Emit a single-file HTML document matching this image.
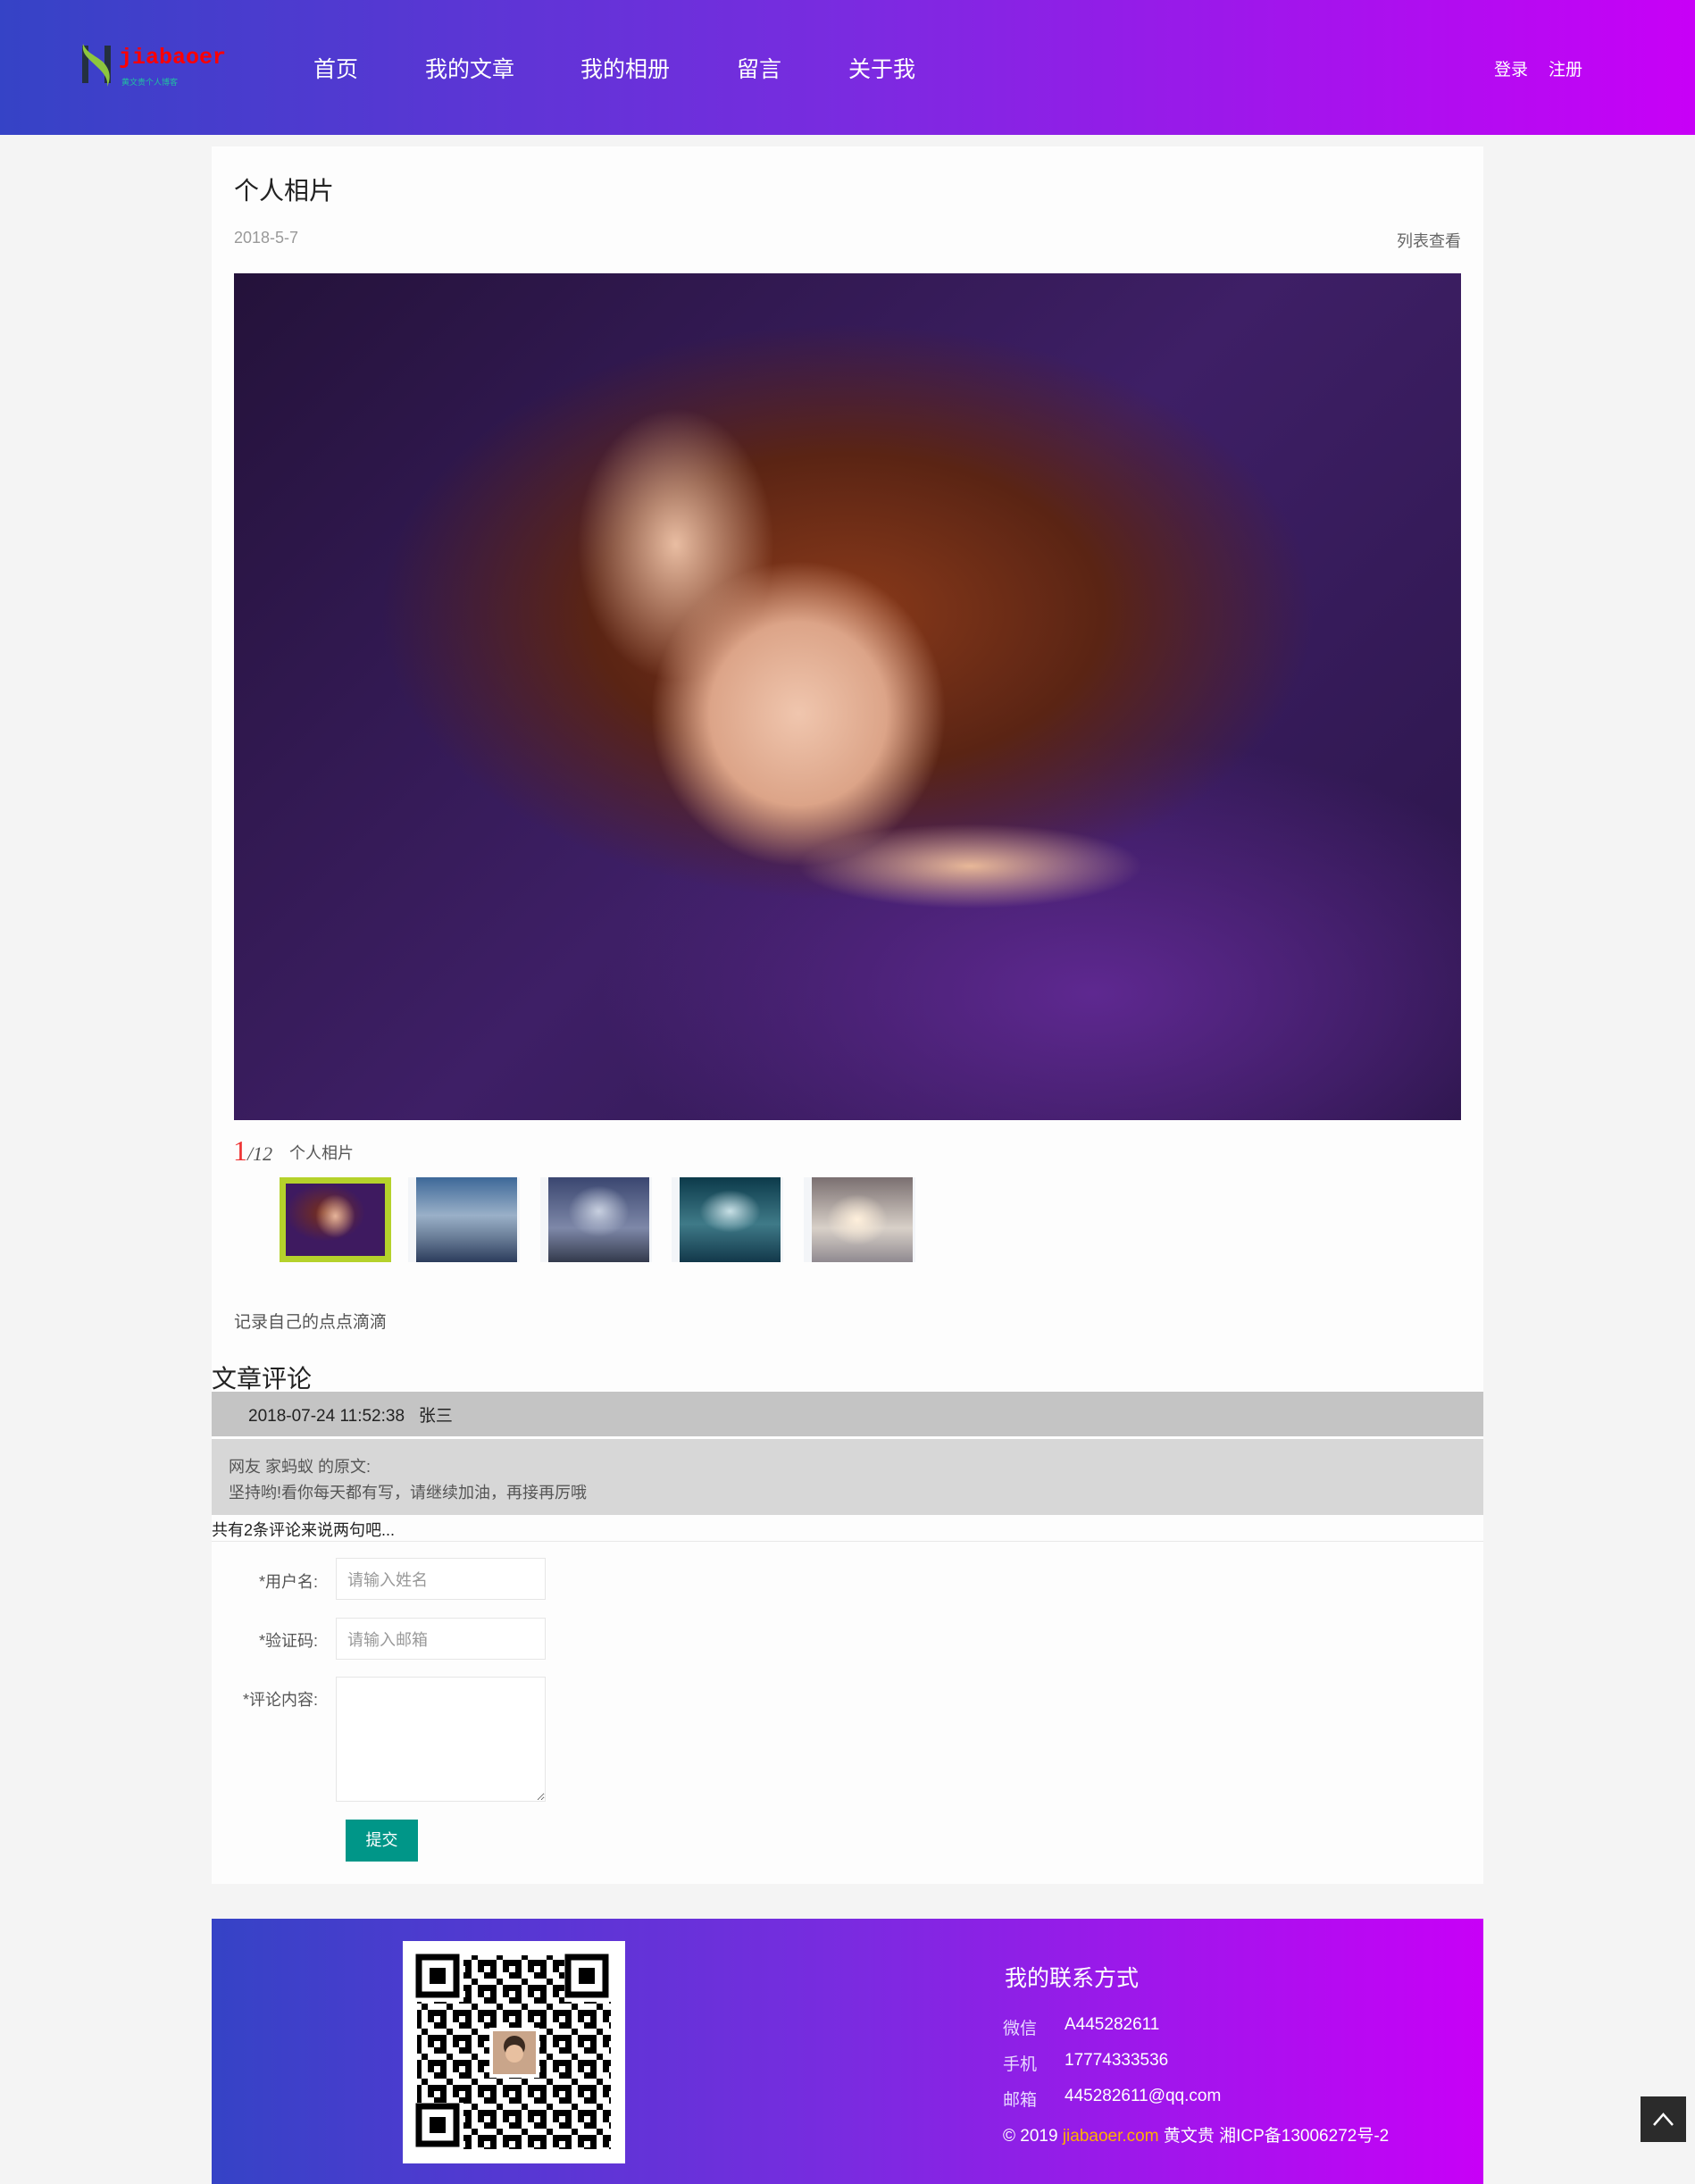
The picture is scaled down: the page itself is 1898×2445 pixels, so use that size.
<!DOCTYPE html>
<html><head><meta charset="utf-8">
<style>
*{margin:0;padding:0;box-sizing:border-box}
body{width:1898px;height:2445px;background:#f4f4f4;font-family:"Liberation Sans","Noto Sans CJK SC",sans-serif;position:relative;overflow:hidden;color:#333}
.abs{position:absolute}
.grad{background:linear-gradient(90deg,#3543c6 0%,#7a2be0 50%,#c800f7 100%)}
header{position:absolute;left:0;top:0;width:1898px;height:151px}
.nav{color:#fff;font-size:25px;top:58px}
.box{left:237px;top:164px;width:1424px;height:1945px;background:#fdfdfd}
.t{white-space:nowrap}
.thumb{top:1318px;height:95px;width:125px;background:#f3f5f8}
.thumb i{position:absolute;top:0;left:9px;width:113px;height:95px;display:block}
input,textarea{position:absolute;border:1px solid #e6e6e6;background:#fff;font-size:18px;color:#999;padding-left:12px;font-family:inherit}
.lbl{font-size:18px;color:#555;text-align:right;width:140px;left:216px}
.ft{color:#fff;font-size:19px}
</style></head><body>
<header class="grad">
  <svg class="abs" style="left:89px;top:47px" width="40" height="50" viewBox="0 0 40 50">
    <rect x="3" y="4" width="7" height="42" fill="#243040"/>
    <rect x="28" y="4" width="7" height="42" fill="#243040"/>
    <path d="M4 2 C2 14 10 18 22 30 C30 38 32 44 31 50 C36 40 34 30 26 22 C16 14 8 12 4 2Z" fill="#8dc63f"/>
  </svg>
  <div class="abs t" style="left:133px;top:50px;color:#f00;font-size:25px;font-family:'Liberation Mono',monospace;font-weight:bold">jiabaoer</div>
  <div class="abs t" style="left:136px;top:85px;color:#20c0a0;font-size:9px">黄文贵个人博客</div>
  <div class="abs nav t" style="left:351px">首页</div>
  <div class="abs nav t" style="left:476px">我的文章</div>
  <div class="abs nav t" style="left:650px">我的相册</div>
  <div class="abs nav t" style="left:825px">留言</div>
  <div class="abs nav t" style="left:950px">关于我</div>
  <div class="abs t" style="left:1673px;top:63px;color:#fff;font-size:19px">登录</div>
  <div class="abs t" style="left:1734px;top:63px;color:#fff;font-size:19px">注册</div>
</header>
<div class="abs box"></div>
<div class="abs t" style="left:262px;top:192px;font-size:28px;color:#222">个人相片</div>
<div class="abs t" style="left:262px;top:256px;font-size:18px;color:#999">2018-5-7</div>
<div class="abs t" style="left:1564px;top:256px;font-size:18px;color:#666">列表查看</div>
<div class="abs" style="left:262px;top:306px;width:1374px;height:948px;overflow:hidden;background:
radial-gradient(ellipse 12% 18% at 46% 52%,#f0c6ae 0%,#dca488 60%,transparent 100%),
radial-gradient(ellipse 14% 5% at 60% 70%,#e8b898 0%,transparent 100%),
radial-gradient(ellipse 8% 16% at 36% 32%,#e9bda2 0%,transparent 100%),
radial-gradient(ellipse 38% 34% at 50% 40%,#8a3a1a 0%,#5a2414 55%,transparent 100%),
radial-gradient(ellipse 40% 30% at 70% 85%,#5e2890 0%,transparent 100%),
linear-gradient(135deg,#24123a 0%,#3e1f66 50%,#2a1548 100%)"></div>
<div class="abs t" style="left:261px;top:1270px;font-size:32px;color:#e33;font-family:'Liberation Serif',serif">1<span style="font-size:22px;color:#555;font-style:italic">/12</span></div>
<div class="abs t" style="left:324px;top:1277px;font-size:18px;color:#555">个人相片</div>
<div class="abs" style="left:313px;top:1318px;width:125px;height:95px;background:#b5d22b"><i style="position:absolute;left:7px;top:7px;width:111px;height:81px;background:radial-gradient(ellipse 20% 30% at 50% 45%,#e6b49a,transparent),radial-gradient(ellipse 40% 40% at 40% 40%,#7a3018,transparent),#3e1a60"></i></div>
<div class="abs thumb" style="left:457px"><i style="background:linear-gradient(180deg,#3d6898 0%,#9ab0c8 45%,#6b7f99 70%,#2c3c5c 100%)"></i></div>
<div class="abs thumb" style="left:605px"><i style="background:radial-gradient(ellipse 30% 30% at 50% 40%,#c8d0e0,transparent),linear-gradient(180deg,#3a4670 0%,#7e88a8 60%,#333a4c 100%)"></i></div>
<div class="abs thumb" style="left:752px"><i style="background:radial-gradient(ellipse 30% 25% at 50% 40%,#c8e0e6,transparent),linear-gradient(180deg,#0c3a4a 0%,#3f7a88 55%,#12384a 100%)"></i></div>
<div class="abs thumb" style="left:900px"><i style="background:radial-gradient(ellipse 30% 30% at 45% 50%,#fff0dc,transparent),linear-gradient(180deg,#7a6f70 0%,#d8d0c8 60%,#908a90 100%)"></i></div>
<div class="abs t" style="left:262px;top:1465px;font-size:19px;color:#555">记录自己的点点滴滴</div>
<div class="abs t" style="left:237px;top:1522px;font-size:28px;color:#222">文章评论</div>
<div class="abs" style="left:237px;top:1558px;width:1424px;height:50px;background:#c4c4c4"></div>
<div class="abs t" style="left:278px;top:1570px;font-size:19px;color:#222">2018-07-24 11:52:38 &nbsp; 张三</div>
<div class="abs" style="left:237px;top:1611px;width:1424px;height:85px;background:#d7d7d7"></div>
<div class="abs t" style="left:256px;top:1628px;font-size:18px;color:#555">网友 家蚂蚁 的原文:</div>
<div class="abs t" style="left:256px;top:1657px;font-size:18px;color:#555">坚持哟!看你每天都有写，请继续加油，再接再厉哦</div>
<div class="abs t" style="left:237px;top:1699px;font-size:18px;color:#222">共有2条评论来说两句吧...</div>
<div class="abs" style="left:237px;top:1725px;width:1424px;height:1px;background:#e8e8e8"></div>
<div class="abs lbl t" style="top:1757px">*用户名:</div>
<input style="left:376px;top:1744px;width:235px;height:47px" value="请输入姓名">
<div class="abs lbl t" style="top:1823px">*验证码:</div>
<input style="left:376px;top:1811px;width:235px;height:47px" value="请输入邮箱">
<div class="abs lbl t" style="top:1889px">*评论内容:</div>
<textarea style="left:376px;top:1877px;width:235px;height:140px"></textarea>
<div class="abs t" style="left:387px;top:2037px;width:81px;height:47px;background:#009688;color:#fff;font-size:18px;text-align:center;line-height:47px">提交</div>
<div class="abs grad" style="left:237px;top:2148px;width:1424px;height:297px"></div>
<div class="abs" style="left:451px;top:2173px;width:249px;height:249px;background:#fff">
<svg width="249" height="249" viewBox="0 0 249 249">
<defs><pattern id="q" width="28" height="28" patternUnits="userSpaceOnUse">
<rect x="0" y="0" width="7" height="7" fill="#000"/><rect x="14" y="0" width="7" height="14" fill="#000"/><rect x="7" y="7" width="7" height="7" fill="#000"/><rect x="21" y="14" width="7" height="7" fill="#000"/><rect x="0" y="21" width="14" height="7" fill="#000"/><rect x="14" y="21" width="7" height="7" fill="#000"/>
</pattern></defs>
<rect x="16" y="16" width="217" height="217" fill="url(#q)"/>
<g fill="#fff"><rect x="14" y="14" width="54" height="54"/><rect x="181" y="14" width="54" height="54"/><rect x="14" y="181" width="54" height="54"/></g>
<g fill="none" stroke="#000" stroke-width="7"><rect x="18" y="18" width="42" height="42"/><rect x="185" y="18" width="42" height="42"/><rect x="18" y="185" width="42" height="42"/></g>
<g fill="#000"><rect x="30" y="30" width="18" height="18"/><rect x="197" y="30" width="18" height="18"/><rect x="30" y="197" width="18" height="18"/></g>
<rect x="97" y="97" width="56" height="56" fill="#fff"/><rect x="101" y="101" width="48" height="48" fill="#c9a58a"/><circle cx="125" cy="118" r="12" fill="#3a2a20"/><circle cx="125" cy="126" r="10" fill="#e8c0a0"/>
</svg></div>
<div class="abs ft t" style="left:1125px;top:2195px;font-size:25px">我的联系方式</div>
<div class="abs ft t" style="left:1123px;top:2256px;color:#e8d8ff">微信</div><div class="abs ft t" style="left:1192px;top:2256px">A445282611</div>
<div class="abs ft t" style="left:1123px;top:2296px;color:#e8d8ff">手机</div><div class="abs ft t" style="left:1192px;top:2296px">17774333536</div>
<div class="abs ft t" style="left:1123px;top:2336px;color:#e8d8ff">邮箱</div><div class="abs ft t" style="left:1192px;top:2336px">445282611@qq.com</div>
<div class="abs ft t" style="left:1123px;top:2376px">© 2019 <span style="color:#ffb000">jiabaoer.com</span> 黄文贵 湘ICP备13006272号-2</div>
<div class="abs" style="left:1837px;top:2347px;width:51px;height:51px;background:#2b2b2b">
<svg width="51" height="51"><path d="M15 32 L25.5 20 L36 32" stroke="#fff" stroke-width="2.5" fill="none"/></svg></div>
</body></html>
